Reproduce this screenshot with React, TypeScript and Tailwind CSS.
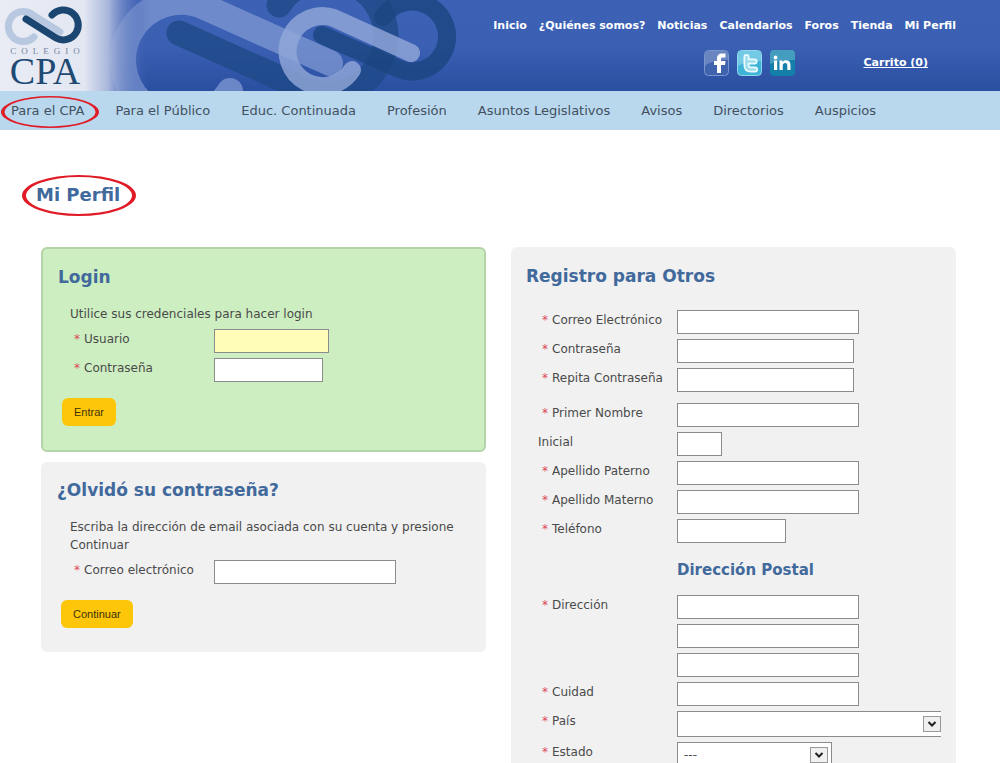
import React from 'react';

interface FieldProps {
  id: string;
  label: string;
  required?: boolean;
  type?: string;
  width?: string;
  className?: string;
}

const topLinks = ['Inicio', '¿Quiénes somos?', 'Noticias', 'Calendarios', 'Foros', 'Tienda', 'Mi Perfil'];

const mainLinks = [
  'Para el CPA',
  'Para el Público',
  'Educ. Continuada',
  'Profesión',
  'Asuntos Legislativos',
  'Avisos',
  'Directorios',
  'Auspicios',
];

const inputBase = 'h-6 border border-[#8c8c8c] px-1 text-xs text-[#333]';

const RequiredLabel: React.FC<{ id: string; label: string; required?: boolean }> = ({ id, label, required = true }) => (
  <label htmlFor={id} className={`flex gap-1 leading-5 ${required ? 'pl-1' : ''}`}>
    {required && <span className="text-[#dc4a5a]">*</span>}
    <span>{label}</span>
  </label>
);

const LoginField: React.FC<FieldProps> = ({ id, label, type = 'text', width = 'w-[182px]', className = 'bg-white' }) => (
  <div className="grid grid-cols-[144px_1fr]">
    <RequiredLabel id={id} label={label} />
    <input id={id} type={type} className={`${inputBase} ${width} ${className}`} />
  </div>
);

const RegisterField: React.FC<FieldProps> = ({ id, label, required = true, type = 'text', width = 'w-[182px]', className = '' }) => (
  <div className={`grid grid-cols-[139px_1fr] ${className}`}>
    <RequiredLabel id={id} label={label} required={required} />
    <input id={id} type={type} className={`${inputBase} bg-white ${width}`} />
  </div>
);

const RedOval: React.FC<{ className: string }> = ({ className }) => (
  <svg viewBox="0 0 100 40" preserveAspectRatio="none" className={`pointer-events-none absolute ${className}`} aria-hidden="true">
    <path
      fill="#e01b26"
      fillRule="evenodd"
      d="M50 0a50 20 0 1 1 0 40a50 20 0 1 1 0-40zM50 2a46.5 18 0 1 0 0 36a46.5 18 0 1 0 0-36z"
    />
  </svg>
);

const SelectArrow: React.FC<{ className: string }> = ({ className }) => (
  <svg viewBox="0 0 18 16" className={`pointer-events-none absolute h-4 w-[18px] ${className}`} aria-hidden="true">
    <rect x="0.5" y="0.5" width="17" height="15" fill="#f0f0f0" stroke="#999" />
    <path d="M5.5 6L9 9.5L12.5 6" fill="none" stroke="#222" strokeWidth="2" />
  </svg>
);

const Logo: React.FC = () => (
  <a href="#" className="relative flex w-[90px] flex-col items-center" aria-label="Colegio CPA">
    <svg viewBox="0 0 90 46" className="h-[46px] w-[90px]" fill="none" strokeLinecap="round" strokeWidth="7" aria-hidden="true">
      <path stroke="#b7c8e0" d="M34 37A15 15 0 1 1 30 13L60 32" />
      <path stroke="#1b4671" d="M52 15A15 15 0 1 1 56 38L26 19" />
    </svg>
    <span className="pl-[5px] font-['Liberation_Serif',serif] text-[9px] leading-[10px] tracking-[5px] text-[#7687a5]">COLEGIO</span>
    <span className="font-['Liberation_Serif',serif] text-[38px] leading-[30px] text-[#1f4a73]">CPA</span>
  </a>
);

// Interlocked links behind the header
const HeaderArt: React.FC = () => (
  <svg viewBox="0 0 480 91" className="absolute left-0 top-0 h-[91px] w-[480px]" fill="none" strokeLinecap="round" aria-hidden="true">
    <defs>
      <linearGradient id="fade" x1="0" x2="1">
        <stop offset="0" stopColor="#e9ecf4" />
        <stop offset="0.56" stopColor="#e3e7f2" />
        <stop offset="0.72" stopColor="#a9b7dc" />
        <stop offset="1" stopColor="#3457ae" stopOpacity="0" />
      </linearGradient>
    </defs>
    <path stroke="#1c4884" strokeOpacity="0.75" strokeWidth="25" d="M279 5A58 58 0 1 1 302 88L179 33" />
    <path stroke="#7f98d2" strokeOpacity="0.75" strokeWidth="26" d="M230 91A58 58 0 1 1 207 8L330 63" />
    <path stroke="#1b4680" strokeOpacity="0.82" strokeWidth="18" d="M383 17A35 35 0 1 1 399 69L322 35" />
    <path stroke="#94a9da" strokeOpacity="0.8" strokeWidth="18" d="M352 70A35 35 0 1 1 334 18L411 53" />
    <rect width="150" height="91" fill="url(#fade)" />
  </svg>
);

const Header: React.FC = () => (
  <header className="relative flex h-[91px] justify-between overflow-hidden bg-linear-to-b from-[#3d62b5] via-[#3b5fb3] to-[#2a4fa1]">
    <HeaderArt />
    <Logo />
    <div className="relative flex flex-col pr-11 pt-[18px] text-[11px] font-bold leading-4 text-white">
      <nav className="flex justify-end gap-3">
        {topLinks.map((link) => (
          <a key={link} href="#">{link}</a>
        ))}
      </nav>
      <div className="mt-4 flex items-center justify-end gap-2 pr-7">
        <a href="#" aria-label="Facebook">
          <svg viewBox="0 0 25 26" className="h-[26px] w-[25px]">
            <rect x="0.5" y="0.5" width="24" height="25" rx="4" fill="#3f63ac" stroke="#7a96cf" />
            <path d="M1 5a4 4 0 0 1 4-4h15a4 4 0 0 1 4 4v5C16 10 6 11 1 16z" fill="#7f99cd" fillOpacity="0.65" />
            <path d="M13 23v-8h-3v-4h3V9c0-4 2-5.5 5-5.5h3.5v4H19c-1.5 0-2 .5-2 2V11h4.5l-.5 4h-4v8z" fill="#fff" />
          </svg>
        </a>
        <a href="#" aria-label="Twitter">
          <svg viewBox="0 0 25 26" className="h-[26px] w-[25px]">
            <rect x="0.5" y="0.5" width="24" height="25" rx="4" fill="#3fb4d6" stroke="#8fd8ee" />
            <path d="M1 5a4 4 0 0 1 4-4h15a4 4 0 0 1 4 4v6C16 11 7 12 1 16z" fill="#8bd3ea" fillOpacity="0.7" />
            <path d="M9.500 7v8c0 3 1.500 4.500 4.500 4.500h4M9.500 11.500h8" fill="none" stroke="#e8fbff" strokeWidth="6" strokeLinecap="round" strokeLinejoin="round" />
            <path d="M9.500 7v8c0 3 1.500 4.500 4.500 4.500h4M9.500 11.500h8" fill="none" stroke="#9fdcee" strokeWidth="2.500" strokeLinecap="round" />
          </svg>
        </a>
        <a href="#" aria-label="LinkedIn">
          <svg viewBox="0 0 25 26" className="h-[26px] w-[25px]">
            <rect width="25" height="26" rx="4" fill="#147fa8" />
            <path d="M0 4a4 4 0 0 1 4-4h17a4 4 0 0 1 4 4v6C16 10 7 11 0 14z" fill="#58a9c8" fillOpacity="0.7" />
            <circle cx="5.600" cy="7.500" r="1.900" fill="#fff" />
            <path d="M4 10.500h3.200V20H4zM9.500 10.500h3v1.400c.8-1.200 2-1.700 3.500-1.700 3.200 0 4.500 1.900 4.500 5V20h-3.200v-4.500c0-1.700-.6-2.600-2-2.600-1.600 0-2.600 1-2.600 2.900V20H9.500z" fill="#fff" />
          </svg>
        </a>
        <a href="#" className="ml-[61px] underline">Carrito (0)</a>
      </div>
    </div>
  </header>
);

const App: React.FC = () => {
  return (
    <div className="h-screen overflow-hidden bg-white font-['DejaVu_Sans',sans-serif] text-xs text-[#4a4a4a]">
      <Header />

      <nav className="flex h-[39px] items-center gap-[31px] whitespace-nowrap bg-[#b9d8ee] pl-[11px] text-[13px] text-[#42505f]">
        {mainLinks.map((link, i) => (
          <a key={link} href="#" className="relative">
            {link}
            {i === 0 && <RedOval className="-left-2.5 -top-1.5 h-8 w-[98px]" />}
          </a>
        ))}
      </nav>

      <main className="pl-[41px] pr-11">
        <div className="-ml-[5px] flex pt-[53px]">
          <h1 className="relative text-lg font-bold leading-6 text-[#41699c]">
            Mi Perfil
            <RedOval className="-left-3.5 -top-2 h-[41px] w-[114px]" />
          </h1>
        </div>

        <div className="mt-10 grid grid-cols-2 items-start gap-[25px]">
          <div className="flex flex-col gap-2.5">
            <form className="rounded-md border-2 border-[#b4d3a8] bg-[#cdeec1] px-[15px] pb-6 pt-4" onSubmit={(e) => e.preventDefault()}>
              <h2 className="text-[17px] font-bold leading-6 text-[#41699c]">Login</h2>
              <div className="pl-3">
                <p className="mt-4 leading-[18px]">Utilice sus credenciales para hacer login</p>
                <div className="mt-1.5 flex flex-col gap-[5px]">
                  <LoginField id="usuario" label="Usuario" width="w-[115px]" className="bg-[#fffdb8]" />
                  <LoginField id="clave" label="Contraseña" type="password" width="w-[109px]" />
                </div>
              </div>
              <button className="ml-1 mt-4 h-7 rounded-md bg-[#fdc608] px-3 font-['Liberation_Sans',sans-serif] text-[11px] text-[#40330a]">Entrar</button>
            </form>

            <form className="rounded-md bg-[#f1f1f1] px-4 pb-6 pt-4" onSubmit={(e) => e.preventDefault()}>
              <h2 className="text-[17px] font-bold leading-6 text-[#41699c]">¿Olvidó su contraseña?</h2>
              <div className="pl-[13px]">
                <p className="mt-4 leading-[18px]">Escriba la dirección de email asociada con su cuenta y presione Continuar</p>
                <div className="mt-1.5">
                  <LoginField id="correo-olvido" label="Correo electrónico" />
                </div>
              </div>
              <button className="ml-1 mt-4 h-7 rounded-md bg-[#fdc608] px-3 font-['Liberation_Sans',sans-serif] text-[11px] text-[#40330a]">Continuar</button>
            </form>
          </div>

          <form className="rounded-md bg-[#f1f1f1] px-[15px] pb-8 pt-[17px]" onSubmit={(e) => e.preventDefault()}>
            <h2 className="text-[17px] font-bold leading-6 text-[#41699c]">Registro para Otros</h2>
            <div className="mt-[22px] flex flex-col gap-[5px] pl-3">
              <RegisterField id="correo" label="Correo Electrónico" />
              <RegisterField id="contrasena" label="Contraseña" type="password" width="w-[177px]" />
              <RegisterField id="repita" label="Repita Contraseña" type="password" width="w-[177px]" />
              <RegisterField id="nombre" label="Primer Nombre" className="mt-1.5" />
              <RegisterField id="inicial" label="Inicial" required={false} width="w-[45px]" />
              <RegisterField id="paterno" label="Apellido Paterno" />
              <RegisterField id="materno" label="Apellido Materno" />
              <RegisterField id="telefono" label="Teléfono" type="tel" width="w-[109px]" />
              <h3 className="mb-2 mt-2.5 pl-[139px] text-[15px] font-bold leading-6 text-[#41699c]">Dirección Postal</h3>
              <div className="grid grid-cols-[139px_1fr]">
                <RequiredLabel id="direccion1" label="Dirección" />
                <div className="flex flex-col gap-[5px]">
                  <input id="direccion1" className={`${inputBase} w-[182px] bg-white`} />
                  <input aria-label="Dirección, línea 2" className={`${inputBase} w-[182px] bg-white`} />
                  <input aria-label="Dirección, línea 3" className={`${inputBase} w-[182px] bg-white`} />
                </div>
              </div>
              <RegisterField id="ciudad" label="Cuidad" />
              <div className="grid grid-cols-[139px_1fr]">
                <RequiredLabel id="pais" label="País" />
                <div className="relative">
                  <select id="pais" className="h-[26px] w-full appearance-none border border-r-0 border-[#8c8c8c] bg-white px-2">
                    <option></option>
                  </select>
                  <SelectArrow className="right-0 top-[5px]" />
                </div>
              </div>
              <div className="grid grid-cols-[139px_1fr]">
                <RequiredLabel id="estado" label="Estado" />
                <div className="relative w-[155px]">
                  <select id="estado" className="h-[26px] w-full appearance-none border border-[#8c8c8c] bg-white px-1.5">
                    <option>---</option>
                  </select>
                  <SelectArrow className="right-1 top-[5px]" />
                </div>
              </div>
            </div>
          </form>
        </div>
      </main>
    </div>
  );
};

export default App;
